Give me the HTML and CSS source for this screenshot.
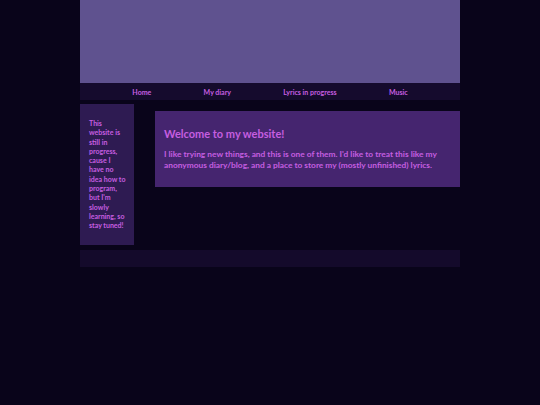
FILE: index.html
```
<!DOCTYPE html>
<html lang="en">
<head>
<meta charset="utf-8">
<title>My website</title>
<link rel="stylesheet" href="styles.css">
</head>
<body>
<div class="page">
  <header class="banner"></header>
  <nav class="nav">
    <a href="#">Home</a>
    <a href="#">My diary</a>
    <a href="#">Lyrics in progress</a>
    <a href="#">Music</a>
  </nav>
  <div class="content">
    <aside class="sidebar">
      <p>This<br>website is<br>still in<br>progress,<br>cause I<br>have no<br>idea how to<br>program,<br>but I'm<br>slowly<br>learning, so<br>stay tuned!</p>
    </aside>
    <main class="main">
      <h1>Welcome to my website!</h1>
      <p>I like trying new things, and this is one of them. I'd like to treat this like my anonymous diary/blog, and a place to store my (mostly unfinished) lyrics.</p>
    </main>
  </div>
  <footer class="footer"></footer>
</div>
</body>
</html>
```
FILE: styles.css
```
html, body {
  margin: 0;
  padding: 0;
}
body {
  background: #09041a;
  font-family: "Lato", "Noto Sans", sans-serif;
  font-weight: 700;
  color: #c65ee0;
  height: 405px;
}
.page {
  width: 380px;
  margin: 0 auto;
}
.banner {
  height: 83px;
  background: #5f528f;
}
.nav {
  height: 17px;
  background: #150b2d;
  display: flex;
  justify-content: space-evenly;
  align-items: center;
  font-size: 7px;
}
.nav a {
  color: #c65ee0;
  text-decoration: none;
}
.content {
  display: flex;
  align-items: flex-start;
  margin-top: 4px;
}
.sidebar {
  width: 54px;
  box-sizing: border-box;
  padding: 15px 3px 14px 9px;
  background: #2e1b52;
  font-size: 7px;
  line-height: 9.3px;
  white-space: nowrap;
}
.sidebar p {
  margin: 0;
}
.main {
  flex: 1;
  margin: 7px 0 0 21px;
  padding: 16px 9px 16px;
  background: #45256f;
}
.main h1 {
  margin: 0 0 8px;
  font-size: 11px;
  line-height: 14px;
}
.main p {
  margin: 0;
  font-size: 8.35px;
  line-height: 11px;
}
.footer {
  height: 17px;
  margin-top: 5px;
  background: #140a2b;
}
```
